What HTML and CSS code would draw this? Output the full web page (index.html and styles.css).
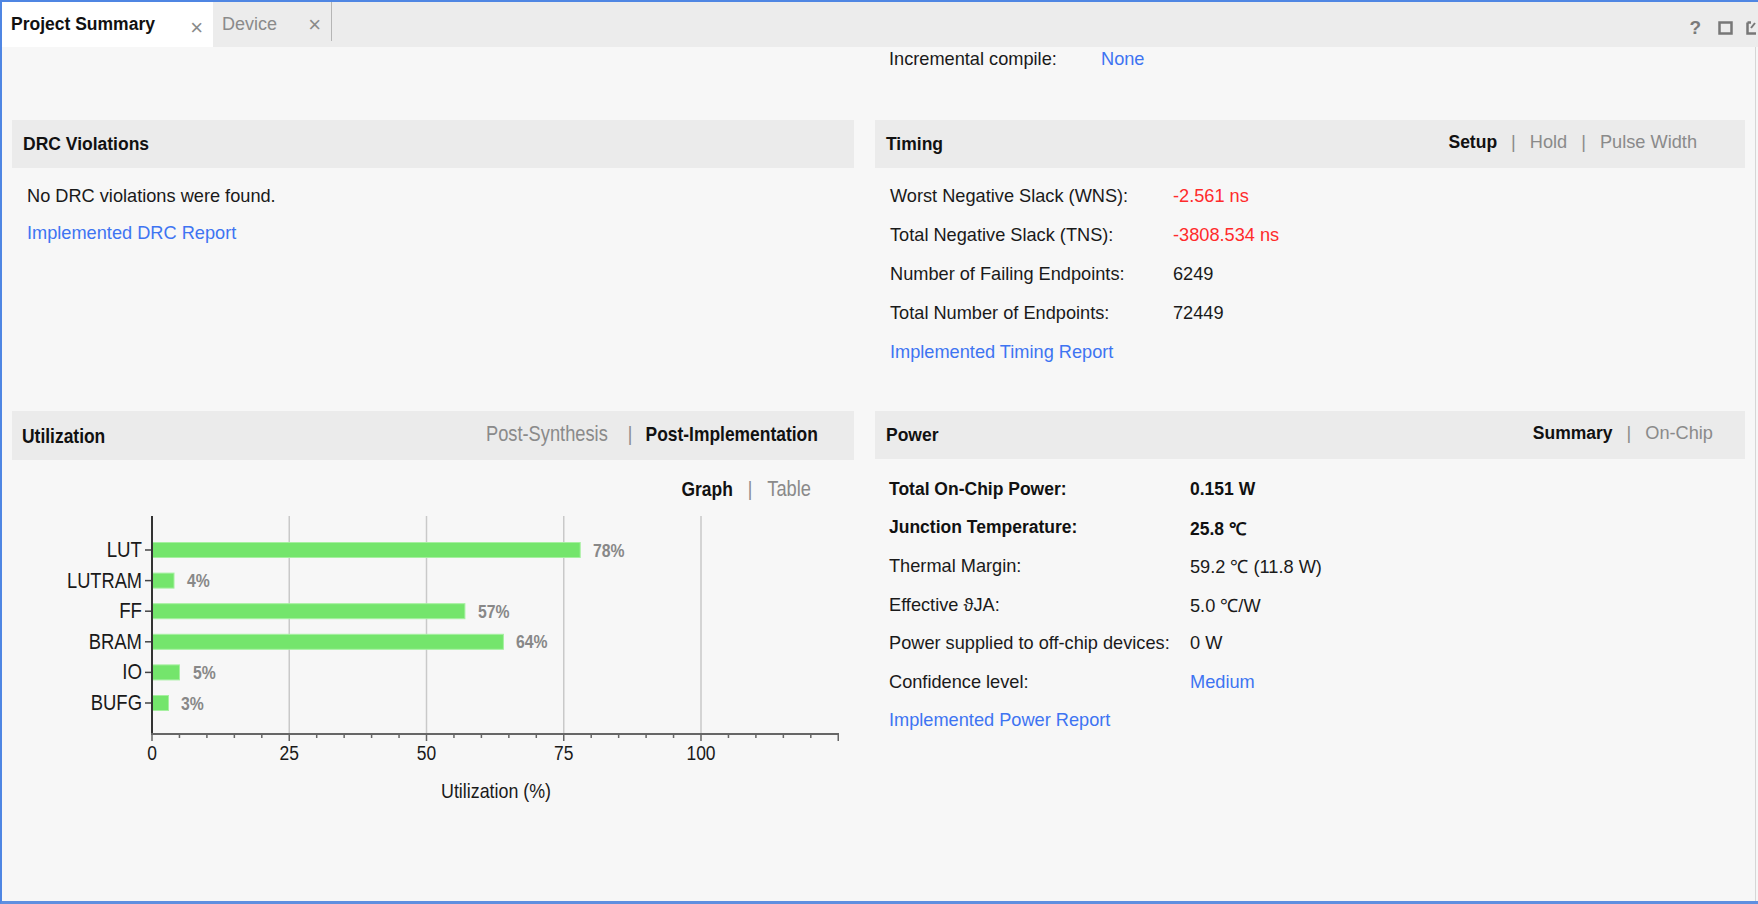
FILE: index.html
```html
<!DOCTYPE html>
<html>
<head>
<meta charset="utf-8">
<link rel="stylesheet" href="styles.css">
</head>
<body>
<div class="window">
  <div class="tabbar">
    <div class="tab active"><span class="tab-label">Project Summary</span><span class="tab-close">×</span></div>
    <div class="tab"><span class="tab-label">Device</span><span class="tab-close">×</span></div>
    <div class="tab-spacer"></div>
    <div class="tab-tools">
      <span class="tool-help">?</span>
      <svg class="tool-icon" width="16" height="16" viewBox="0 0 16 16"><rect x="1.5" y="2.5" width="12" height="11" fill="none" stroke="#777" stroke-width="2.5"/></svg>
      <svg class="tool-icon cut" width="10" height="16" viewBox="0 0 10 16"><path d="M1.5 2.5 V13.5 H10 M1.5 2.5 H5" fill="none" stroke="#777" stroke-width="2.5"/><path d="M5 8 L9 3" stroke="#777" stroke-width="2"/></svg>
    </div>
  </div>
  <div class="content">
    <div class="grid">
      <div class="cell"></div>
      <div class="cell incr">
        <span class="k wide-k">Incremental compile:</span><span class="link">None</span>
      </div>

      <section class="panel">
        <div class="panel-head"><span class="title">DRC Violations</span></div>
        <div class="panel-body drc-body">
          <div class="row">No DRC violations were found.</div>
          <div class="row link">Implemented DRC Report</div>
        </div>
      </section>

      <section class="panel">
        <div class="panel-head"><span class="title">Timing</span>
          <div class="switch timing-switch"><span class="on">Setup</span><span class="sep">|</span><span class="off">Hold</span><span class="sep">|</span><span class="off">Pulse Width</span></div>
        </div>
        <div class="panel-body timing-body">
          <div class="row"><span class="k tk">Worst Negative Slack (WNS):</span><span class="bad">-2.561 ns</span></div>
          <div class="row"><span class="k tk">Total Negative Slack (TNS):</span><span class="bad">-3808.534 ns</span></div>
          <div class="row"><span class="k tk">Number of Failing Endpoints:</span><span>6249</span></div>
          <div class="row"><span class="k tk">Total Number of Endpoints:</span><span>72449</span></div>
          <div class="row link">Implemented Timing Report</div>
        </div>
      </section>

      <section class="panel util">
        <div class="panel-head"><span class="title squeeze-left">Utilization</span>
          <div class="util-switch"><span class="squeeze-right"><span class="off">Post-Synthesis</span><span class="sep">|</span><span class="on">Post-Implementation</span></span></div>
        </div>
        <div class="graph-switch"><span class="squeeze-right"><span class="on">Graph</span><span class="sep">|</span><span class="off">Table</span></span></div>
        <svg class="chart" width="842" height="305" viewBox="0 0 842 305">
          <g stroke="#c9c9c9" stroke-width="1.5">
            <line x1="277.25" y1="11" x2="277.25" y2="229"/>
            <line x1="414.5" y1="11" x2="414.5" y2="229"/>
            <line x1="551.75" y1="11" x2="551.75" y2="229"/>
            <line x1="689" y1="11" x2="689" y2="229"/>
          </g>
          <g fill="#74e56c" stroke="#a6f0a0" stroke-width="1">
            <rect x="140" y="37.5" width="428.2" height="15"/>
            <rect x="140" y="68.1" width="22" height="15"/>
            <rect x="140" y="98.7" width="312.9" height="15"/>
            <rect x="140" y="129.3" width="351.4" height="15"/>
            <rect x="140" y="159.9" width="27.5" height="15"/>
            <rect x="140" y="190.5" width="16.5" height="15"/>
          </g>
          <g class="cat" text-anchor="end">
            <text transform="translate(130 52) scale(0.85 1)">LUT</text>
            <text transform="translate(130 82.6) scale(0.83 1)">LUTRAM</text>
            <text transform="translate(130 113.2) scale(0.85 1)">FF</text>
            <text transform="translate(130 143.8) scale(0.84 1)">BRAM</text>
            <text transform="translate(130 174.4) scale(0.85 1)">IO</text>
            <text transform="translate(130 205) scale(0.84 1)">BUFG</text>
          </g>
          <g stroke="#444" stroke-width="1.5">
            <line x1="133" y1="45" x2="140" y2="45"/>
            <line x1="133" y1="75.6" x2="140" y2="75.6"/>
            <line x1="133" y1="106.2" x2="140" y2="106.2"/>
            <line x1="133" y1="136.8" x2="140" y2="136.8"/>
            <line x1="133" y1="167.4" x2="140" y2="167.4"/>
            <line x1="133" y1="198" x2="140" y2="198"/>
          </g>
          <g class="val">
            <text transform="translate(581 51.5) scale(0.83 1)">78%</text>
            <text transform="translate(175 82.1) scale(0.83 1)">4%</text>
            <text transform="translate(466 112.7) scale(0.83 1)">57%</text>
            <text transform="translate(504 143.3) scale(0.83 1)">64%</text>
            <text transform="translate(181 173.9) scale(0.83 1)">5%</text>
            <text transform="translate(169 204.5) scale(0.83 1)">3%</text>
          </g>
          <line x1="140" y1="11" x2="140" y2="230" stroke="#333" stroke-width="2"/>
          <line x1="139" y1="229" x2="827" y2="229" stroke="#666" stroke-width="2"/>
          <g stroke="#666" stroke-width="1.5">
            <line x1="140" y1="229" x2="140" y2="236"/>
            <line x1="167.45" y1="229" x2="167.45" y2="233"/>
            <line x1="194.9" y1="229" x2="194.9" y2="233"/>
            <line x1="222.35" y1="229" x2="222.35" y2="233"/>
            <line x1="249.8" y1="229" x2="249.8" y2="233"/>
            <line x1="277.25" y1="229" x2="277.25" y2="236"/>
            <line x1="304.7" y1="229" x2="304.7" y2="233"/>
            <line x1="332.15" y1="229" x2="332.15" y2="233"/>
            <line x1="359.6" y1="229" x2="359.6" y2="233"/>
            <line x1="387.05" y1="229" x2="387.05" y2="233"/>
            <line x1="414.5" y1="229" x2="414.5" y2="236"/>
            <line x1="441.95" y1="229" x2="441.95" y2="233"/>
            <line x1="469.4" y1="229" x2="469.4" y2="233"/>
            <line x1="496.85" y1="229" x2="496.85" y2="233"/>
            <line x1="524.3" y1="229" x2="524.3" y2="233"/>
            <line x1="551.75" y1="229" x2="551.75" y2="236"/>
            <line x1="579.2" y1="229" x2="579.2" y2="233"/>
            <line x1="606.65" y1="229" x2="606.65" y2="233"/>
            <line x1="634.1" y1="229" x2="634.1" y2="233"/>
            <line x1="661.55" y1="229" x2="661.55" y2="233"/>
            <line x1="689" y1="229" x2="689" y2="236"/>
            <line x1="716.45" y1="229" x2="716.45" y2="233"/>
            <line x1="743.9" y1="229" x2="743.9" y2="233"/>
            <line x1="771.35" y1="229" x2="771.35" y2="233"/>
            <line x1="798.8" y1="229" x2="798.8" y2="233"/>
            <line x1="826.25" y1="229" x2="826.25" y2="236"/>
          </g>
          <g class="tick" text-anchor="middle">
            <text transform="translate(140 255) scale(0.83 1)">0</text>
            <text transform="translate(277.25 255) scale(0.83 1)">25</text>
            <text transform="translate(414.5 255) scale(0.83 1)">50</text>
            <text transform="translate(551.75 255) scale(0.83 1)">75</text>
            <text transform="translate(689 255) scale(0.83 1)">100</text>
          </g>
          <text class="axis-title" transform="translate(484 293) scale(0.85 1)" text-anchor="middle">Utilization (%)</text>
        </svg>
      </section>

      <section class="panel">
        <div class="panel-head"><span class="title">Power</span>
          <div class="switch power-switch"><span class="on">Summary</span><span class="sep">|</span><span class="off">On-Chip</span></div>
        </div>
        <div class="panel-body power-body">
          <div class="row"><span class="k pk strong">Total On-Chip Power:</span><span class="strong">0.151 W</span></div>
          <div class="row"><span class="k pk strong">Junction Temperature:</span><span class="strong">25.8 ℃</span></div>
          <div class="row"><span class="k pk">Thermal Margin:</span><span>59.2 ℃ (11.8 W)</span></div>
          <div class="row"><span class="k pk">Effective ϑJA:</span><span>5.0 ℃/W</span></div>
          <div class="row"><span class="k pk">Power supplied to off-chip devices:</span><span>0 W</span></div>
          <div class="row"><span class="k pk">Confidence level:</span><span class="link">Medium</span></div>
          <div class="row link">Implemented Power Report</div>
        </div>
      </section>
    </div>
  </div>
</div>
</body>
</html>
```

FILE: styles.css
```css
html, body {
  margin: 0;
  padding: 0;
  background: #f7f7f7;
}

body {
  font-family: "Liberation Sans", Arial, sans-serif;
  font-size: 18.2px;
  color: #1a1a1a;
}

.window {
  width: 1758px;
  height: 904px;
  box-sizing: border-box;
  border-top: 2px solid #4f86e3;
  border-left: 2px solid #4f86e3;
  border-bottom: 3px solid #5f8fe0;
  display: flex;
  flex-direction: column;
  overflow: hidden;
}

.tabbar {
  height: 45px;
  flex: none;
  display: flex;
  background: #ececec;
}

.tab {
  display: flex;
  align-items: center;
  height: 45px;
  box-sizing: border-box;
  padding-left: 9px;
}

.tab.active {
  width: 211px;
  background: #ffffff;
}

.tab.active .tab-label {
  font-weight: bold;
  font-size: 17.5px;
  color: #111;
}

.tab:not(.active) {
  width: 119px;
  border-right: 1px solid #b5b5b5;
  height: 39px;
}

.tab:not(.active) .tab-label {
  color: #8a8a8a;
  font-size: 18px;
  margin-top: 6px;
}

.tab-close {
  margin-left: auto;
  margin-right: 10px;
  margin-top: 7px;
  font-size: 22px;
  color: #8a8a8a;
  line-height: 1;
}

.tab-spacer {
  flex: 1;
}

.tab-tools {
  display: flex;
  align-items: center;
  gap: 12px;
  padding-top: 6px;
  margin-right: 2px;
}

.tool-help {
  font-weight: bold;
  font-size: 19px;
  color: #7a7a7a;
  margin-right: 5px;
}

.content {
  flex: 1;
  background: #f7f7f7;
  border-right: 1px solid #d6d6d6;
  margin-right: 2px;
  overflow: hidden;
}

.grid {
  display: grid;
  grid-template-columns: 842px 870px;
  grid-template-rows: 73px 291px auto;
  column-gap: 21px;
  padding-left: 10px;
}

.incr {
  padding-left: 14px;
  line-height: 24px;
}

.wide-k {
  display: inline-block;
  width: 212px;
}

.link {
  color: #3e74f2;
}

.panel-head {
  height: 48px;
  background: #ebebeb;
  display: flex;
  align-items: center;
  padding-left: 11px;
}

.panel-head .title {
  font-weight: bold;
  font-size: 17.5px;
  color: #111;
}

.switch {
  margin-left: auto;
  display: flex;
  align-items: center;
  margin-top: -4px;
}

.switch .on {
  font-weight: bold;
  font-size: 17.5px;
  color: #111;
}

.switch .off {
  color: #8a8a8a;
}

.switch .sep {
  color: #8a8a8a;
  margin: 0 14px;
}

.timing-switch {
  padding-right: 48px;
}

.power-switch {
  padding-right: 32px;
}

.panel-body {
  padding-left: 15px;
}

.row {
  display: flex;
  align-items: center;
}

.drc-body {
  padding-top: 10px;
}

.drc-body .row {
  height: 37px;
}

.timing-body {
  padding-top: 9px;
}

.timing-body .row {
  height: 39px;
}

.tk {
  width: 283px;
}

.bad {
  color: #ff2b2b;
}

.power-body {
  padding-top: 11px;
  padding-left: 14px;
}

.power-body .row {
  height: 38.6px;
}

.pk {
  width: 301px;
}

.strong {
  font-weight: bold;
  font-size: 17.5px;
  color: #111;
}

/* condensed (Arial Narrow-like) text in the utilization panel */
.squeeze-left,
.squeeze-right {
  display: inline-flex;
  align-items: center;
  transform: scaleX(0.83);
  font-size: 21px;
  white-space: nowrap;
}

.squeeze-left {
  transform-origin: left center;
}

.squeeze-right {
  transform-origin: right center;
}

.util .panel-head {
  height: 49px;
  padding-left: 10px;
}

.util .panel-head .title {
  font-size: 21px;
}

.util-switch {
  margin-left: auto;
  margin-top: -4px;
  padding-right: 36px;
}

.util-switch .on,
.graph-switch .on {
  font-weight: bold;
  color: #111;
}

.util-switch .off,
.graph-switch .off {
  color: #8a8a8a;
  font-size: 22px;
}

.util-switch .sep {
  color: #8a8a8a;
  margin: 0 16px 0 24px;
}

.graph-switch {
  display: flex;
  justify-content: flex-end;
  align-items: center;
  height: 30px;
  margin-top: 14px;
  padding-right: 43px;
}

.graph-switch .sep {
  color: #8a8a8a;
  margin: 0 18px 0 18px;
}

.chart {
  display: block;
  margin-top: 1px;
}

.chart text {
  font-family: "Liberation Sans", Arial, sans-serif;
  font-size: 21px;
  fill: #1a1a1a;
}

.chart .cat text {
  font-size: 22px;
}

.chart .val text {
  font-weight: bold;
  font-size: 19px;
  fill: #888;
}
```
